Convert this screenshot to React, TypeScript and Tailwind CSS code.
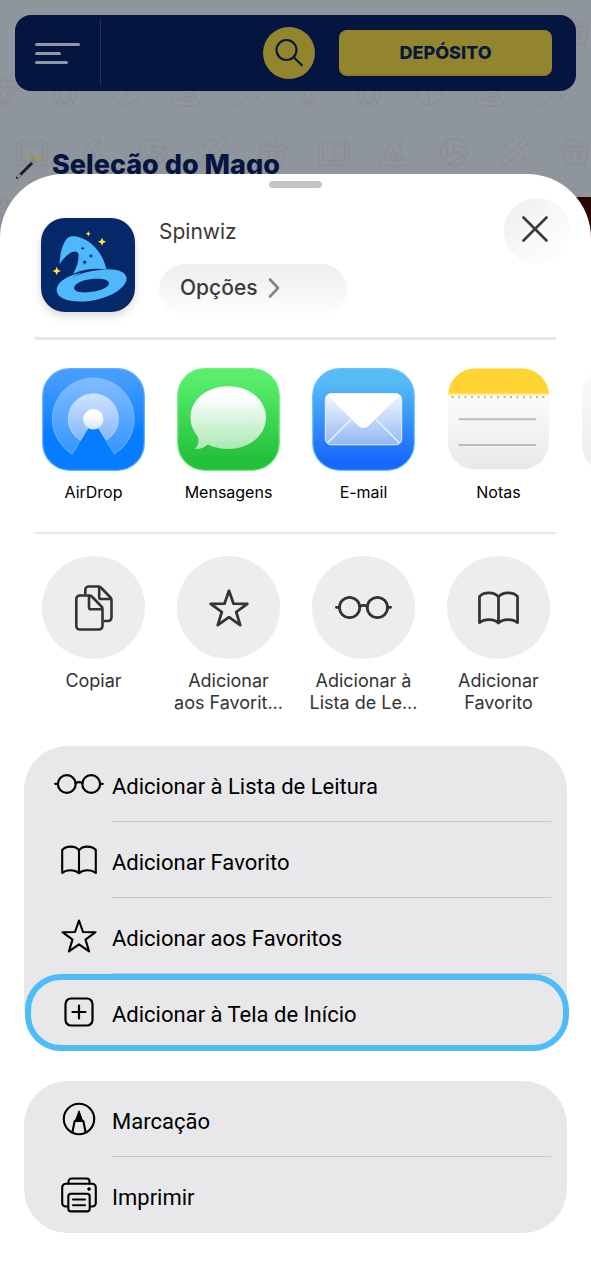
import type { ReactNode } from 'react';
import { Box, Gem, Luggage, Volleyball, WandSparkles } from 'lucide-react';

type IconProps = { className?: string; stroke?: number; strokeWidth?: number };

const GlassesIcon = ({ className, stroke = 2.2 }: IconProps) => (
  <svg viewBox="0 0 50 20" className={className} fill="none" stroke="currentColor" strokeWidth={stroke} strokeLinecap="round" aria-hidden="true">
    <circle cx="12.8" cy="10" r="8.9" />
    <circle cx="37.2" cy="10" r="8.9" />
    <path d="M21.5 9.1c1.8-.9 5.2-.9 7 0M1.2 9.8h2.6M46.2 9.8h2.6" />
  </svg>
);

const BookIcon = ({ className, stroke = 2.1 }: IconProps) => (
  <svg viewBox="0 0 36 30" className={className} fill="none" stroke="currentColor" strokeWidth={stroke} strokeLinejoin="round" aria-hidden="true">
    <path d="M18 5.4C16.4 2.9 13 1.6 9.6 1.6 6.2 1.6 3 2.7 1.2 5v23c2-1.7 5-2.7 8.4-2.7 3.4 0 6.4 1 8.4 2.9 2-1.9 5-2.9 8.4-2.9 3.4 0 6.4 1 8.4 2.7V5C33 2.7 29.8 1.6 26.4 1.6 23 1.6 19.6 2.9 18 5.4Zm0 0v22.8" />
  </svg>
);

const StarIcon = ({ className, stroke = 2.1 }: IconProps) => (
  <svg viewBox="0 0 36 34" className={className} fill="none" stroke="currentColor" strokeWidth={stroke} strokeLinejoin="round" aria-hidden="true">
    <path d="M18 1.5 22 13l12.5.2-10 7.4 3.6 11.8L18 25.3 7.9 32.4l3.6-11.8-10-7.4L14 13Z" />
  </svg>
);

const CopyIcon = ({ className, stroke = 2.6 }: IconProps) => (
  <svg viewBox="0 0 38 46" className={className} fill="none" stroke="currentColor" strokeWidth={stroke} strokeLinejoin="round" aria-hidden="true">
    <path d="M10.3 9.5V5a3.5 3.5 0 0 1 3.5-3.5h9.5c1 0 1.8.3 2.5 1l9.7 10c.7.7 1 1.5 1 2.5v17.5a3.5 3.5 0 0 1-3.5 3.5h-4.5" />
    <path d="M24.2 2v10.2c0 1.2.6 1.8 1.8 1.8h10" />
    <path d="M4.8 10.5h9.5c1 0 1.8.3 2.5 1l9.7 10c.7.7 1 1.5 1 2.5v17a3.5 3.5 0 0 1-3.5 3.5H4.8A3.5 3.5 0 0 1 1.3 41V14a3.5 3.5 0 0 1 3.5-3.5Z" />
    <path d="M14 11v11.5c0 1.2.6 1.8 1.8 1.8H27" />
  </svg>
);

const AddSquareIcon = ({ className, stroke = 2.2 }: IconProps) => (
  <svg viewBox="0 0 30 30" className={className} fill="none" stroke="currentColor" strokeWidth={stroke} strokeLinecap="round" aria-hidden="true">
    <rect x="1.5" y="1.5" width="27" height="27" rx="5.5" />
    <path d="M15 8.5v13M8.5 15h13" />
  </svg>
);

const MarkupIcon = ({ className, stroke = 2.1 }: IconProps) => (
  <svg viewBox="0 0 34 34" className={className} fill="none" stroke="currentColor" strokeWidth={stroke} strokeLinejoin="round" aria-hidden="true">
    <circle cx="17" cy="17" r="15.2" />
    <path d="M10.3 30.5 12.7 19h8.6l2.4 11.5" />
    <path d="m17 8.8 3.8 10.2h-7.6Z" fill="currentColor" strokeWidth="1" />
  </svg>
);

const PrinterIcon = ({ className, stroke = 2.1 }: IconProps) => (
  <svg viewBox="0 0 36 36" className={className} fill="none" stroke="currentColor" strokeWidth={stroke} strokeLinecap="round" aria-hidden="true">
    <path d="M7.5 6.5v-2a3 3 0 0 1 3-3h15a3 3 0 0 1 3 3v2" />
    <path d="M7 29.5H4.7a3.5 3.5 0 0 1-3.5-3.5V10.5A3.8 3.8 0 0 1 5 6.7h26a3.8 3.8 0 0 1 3.8 3.8V26a3.5 3.5 0 0 1-3.5 3.5H29" />
    <rect x="7.3" y="16.8" width="21.4" height="17.6" rx="2.6" />
    <path d="M12 22.5h12M12 28.2h12" />
    <circle cx="28" cy="12" r="1.3" fill="currentColor" strokeWidth="1" />
  </svg>
);

const SpellBook = ({ className }: IconProps) => (
  <svg viewBox="0 0 24 24" className={className} fill="none" stroke="currentColor" aria-hidden="true">
    <path d="M1 5h3V3l8 2 8-2v2h3v17H1ZM12 5v17M4 5v14h16V5M7 4.5v5M9.5 5v4M14.5 5v4M17 4.5v5" />
  </svg>
);

const WizardHat = ({ className }: IconProps) => (
  <svg viewBox="0 0 24 24" className={className} fill="none" stroke="currentColor" strokeLinejoin="round" aria-hidden="true">
    <path d="M5 17C7 9 10 3 17 2l2 3-3 .5c0 4 2 8 3 11.5M5 17c-5 1-5 4 0 5 4 .8 10 .8 14 0 5-1 5-4 0-5-3 2-11 2-14 0ZM12 11l1 2h2l-1.5 1.5.5 2-2-1-2 1 .5-2L9 13h2Z" />
  </svg>
);

const Cauldron = ({ className }: IconProps) => (
  <svg viewBox="0 0 24 24" className={className} fill="none" stroke="currentColor" strokeLinejoin="round" aria-hidden="true">
    <path d="M2 8h20v3H2ZM4 11c-2 5-1 8 2 10h12c3-2 4-5 2-10M6 21l-2 2M18 21l2 2M8 11v4c0 1 2 1 2 0v-4M14 11v6c0 1 2 1 2 0v-6" />
    <circle cx="8" cy="5" r="2" />
    <circle cx="14" cy="3.5" r="1.5" />
    <circle cx="18" cy="6" r="1" />
  </svg>
);

const SpinwizLogo = () => (
  <svg viewBox="0 0 94 94" className="size-[94px] shrink-0 rounded-3xl drop-shadow-lg" aria-hidden="true">
    <rect width="94" height="94" fill="#05286b" />
    <path fill="#4fb8fb" d="M18.5 46.3C19 34 23 18.5 31 18.3 44 18 61 30 65.5 51.5c-11-1.5-23-.5-33.5 4.5 3.5-6 6-13 5.5-19.5C36.5 30.5 27 33 18.5 46.3Z" />
    <path fill="#4fb8fb" fillRule="evenodd" d="M58 52c17-2.5 28 1.5 27.5 9-.5 9-17 19.5-37 22C30 85 16 81 15.7 72.500 15.5 64 27 57.5 40 54.8 34 58 32 59 32 59c8-3.5 16-6 26-7ZM51 61c-9 .8-17.8 4.5-17.8 9 0 3.5 6 5.2 16 4 11-1.2 19-5 18.8-9-.2-3.5-8-4.8-17-4Z" />
    <g fill="#ffe92e">
      <path d="m47.3 13 .8 1.9 1.9.8-1.9.8-.8 1.9-.8-1.9-1.9-.8 1.9-.8Z" />
      <path d="m61 19.5 1.2 3 3 1.2-3 1.2-1.2 3-1.2-3-3-1.2 3-1.2Z" />
      <path d="m15.7 48.8 1.2 3 3 1.2-3 1.2-1.2 3-1.2-3-3-1.2 3-1.2Z" />
    </g>
    <g fill="#05286b">
      <path d="m41.7 28.3.6 1.4 1.4.6-1.4.6-.6 1.4-.6-1.4-1.4-.6 1.4-.6Z" />
      <path d="m50 35.8.7 1.5 1.5.7-1.5.7-.7 1.5-.7-1.5-1.5-.7 1.5-.7Z" />
      <path d="m43.7 41.8.8 1.7 1.7.8-1.7.8-.8 1.7-.8-1.7-1.7-.8 1.7-.8Z" />
    </g>
  </svg>
);

const AirDropTile = () => (
  <svg viewBox="0 0 103 103" className="size-[103px]" aria-hidden="true">
    <defs>
      <linearGradient id="air" x1="0" y1="0" x2="0" y2="1">
        <stop offset="0.1" stopColor="#459cfe" />
        <stop offset="0.65" stopColor="#057dfe" />
      </linearGradient>
      <linearGradient id="airOuter" x1="0" y1="0" x2="0" y2="1">
        <stop offset="0" stopColor="#82bcff" />
        <stop offset="1" stopColor="#3396ff" />
      </linearGradient>
      <linearGradient id="airInner" x1="0" y1="0" x2="0" y2="1">
        <stop offset="0" stopColor="#cfe4ff" />
        <stop offset="1" stopColor="#84b6fb" />
      </linearGradient>
      <linearGradient id="airDot" x1="0" y1="0" x2="0" y2="1">
        <stop offset="0.3" stopColor="#fff" />
        <stop offset="1" stopColor="#d5e3fb" />
      </linearGradient>
    </defs>
    <rect x="0.7" y="0.7" width="101.6" height="101.6" rx="27" fill="url(#air)" stroke="#5fb0ff" strokeWidth="1.2" />
    <path d="M51.3 52 30.3 86A41 41 0 1 1 72.3 86Z" fill="url(#airOuter)" stroke="#7dbcff" strokeWidth="0.8" strokeLinejoin="round" />
    <path d="M51.3 52 38.7 72.3A25 25 0 1 1 63.9 72.3Z" fill="url(#airInner)" stroke="#c5defe" strokeWidth="0.8" strokeLinejoin="round" />
    <path d="M51.3 52 30.3 86.7 34 90H69l3.3-3.3Z" fill="#057dfe" />
    <circle cx="51.3" cy="51.2" r="10.2" fill="url(#airDot)" />
  </svg>
);

const MessagesTile = () => (
  <svg viewBox="0 0 103 103" className="size-[103px]" aria-hidden="true">
    <defs>
      <linearGradient id="msg" x1="0" y1="0" x2="0" y2="1">
        <stop offset="0.1" stopColor="#58ee6c" />
        <stop offset="0.9" stopColor="#23c03c" />
      </linearGradient>
      <linearGradient id="bubble" x1="0" y1="0" x2="0" y2="1">
        <stop offset="0.15" stopColor="#fff" />
        <stop offset="1" stopColor="#abe8b3" />
      </linearGradient>
    </defs>
    <rect x="0.7" y="0.7" width="101.6" height="101.6" rx="27" fill="url(#msg)" stroke="#6fee80" strokeWidth="1.2" />
    <path
      fill="url(#bubble)"
      d="M51.3 18.3C72.5 18.3 89 31.8 89 49.5S72.5 81 51.3 81c-7.5 0-14.8-1.6-20.5-4.5-3.3 3.2-8.500 5-13.1 4.3 3.9-3.6 4.7-8.3 2.8-12.8C16 62.5 13.5 56.5 13.5 49.5 13.5 31.8 30 18.3 51.3 18.3Z"
    />
  </svg>
);

const MailTile = () => (
  <svg viewBox="0 0 103 103" className="size-[103px]" aria-hidden="true">
    <defs>
      <linearGradient id="mail" x1="0" y1="0" x2="0" y2="1">
        <stop offset="0.12" stopColor="#57bcf5" />
        <stop offset="0.9" stopColor="#1769fb" />
      </linearGradient>
      <linearGradient id="paper" x1="0" y1="0" x2="0" y2="1">
        <stop offset="0" stopColor="#f6f9ff" />
        <stop offset="1" stopColor="#93b8f3" />
      </linearGradient>
    </defs>
    <rect x="0.7" y="0.7" width="101.6" height="101.6" rx="27" fill="url(#mail)" stroke="#6cc3fa" strokeWidth="1.2" />
    <rect x="13.3" y="25.6" width="76.4" height="51.2" rx="6" fill="url(#paper)" stroke="#e8f1ff" />
    <path d="M15.5 75 39 51.5M87.5 75 64 51.5" stroke="#f2f7ff" strokeWidth="1.2" />
    <path d="M15.5 27.2c1.2-1.2 2.5-1.6 4-1.6h64c1.5 0 2.8.4 4 1.6L57.5 57c-3.5 3.8-8.7 3.8-12.2 0Z" fill="#fff" />
  </svg>
);

const NotesTile = () => (
  <svg viewBox="0 0 103 103" className="size-[103px]" aria-hidden="true">
    <defs>
      <linearGradient id="note" x1="0" y1="0" x2="0" y2="1">
        <stop offset="0.3" stopColor="#fbfbfb" />
        <stop offset="1" stopColor="#e8e8e8" />
      </linearGradient>
      <clipPath id="noteClip">
        <rect x="1" y="0.5" width="101" height="101" rx="27" />
      </clipPath>
    </defs>
    <g clipPath="url(#noteClip)">
      <rect width="103" height="103" fill="url(#note)" />
      <rect width="103" height="27" fill="#ffd434" />
      <rect y="25.5" width="103" height="2" fill="#ffee9e" />
    </g>
    <path d="M5.5 29.2h92" stroke="#b5b0a2" strokeWidth="2.2" strokeLinecap="round" strokeDasharray="0 6.5" />
    <path d="M12.5 51.3h76M12.5 77h76" stroke="#bcbcbc" strokeWidth="2" strokeLinecap="round" />
  </svg>
);

const WandIcon = () => (
  <svg viewBox="0 0 28 28" className="size-7 shrink-0" aria-hidden="true">
    <path d="M1.5 26.5 20 8" stroke="#1d1f22" strokeWidth="3" strokeLinecap="round" />
    <path d="m1.5 26.5 3-3M16 12l4-4" stroke="#8f8f8c" strokeWidth="3" />
    <path d="m21 2 1.2 3.8L26 7l-3.8 1.2L21 12l-1.2-3.8L16 7l3.8-1.2ZM13.5 3l.7 2 2 .7-2 .7-.7 2-.7-2-2-.7 2-.7Z" fill="#aa984a" />
  </svg>
);

const patternRows = [0, 1, 2, 3];
const evenPattern = [SpellBook, WizardHat, Volleyball, WandSparkles, Cauldron];
const oddPattern = [Gem, Luggage, Box, WizardHat, WandSparkles];

const apps: { name: string; tile: ReactNode }[] = [
  { name: 'AirDrop', tile: <AirDropTile /> },
  { name: 'Mensagens', tile: <MessagesTile /> },
  { name: 'E-mail', tile: <MailTile /> },
  { name: 'Notas', tile: <NotesTile /> },
];

const shortcuts: { lines: string[]; icon: ReactNode }[] = [
  { lines: ['Copiar'], icon: <CopyIcon className="h-[46px] w-[38px]" /> },
  { lines: ['Adicionar', 'aos Favorit...'], icon: <StarIcon className="h-[38px] w-10" stroke={2.5} /> },
  { lines: ['Adicionar à', 'Lista de Le...'], icon: <GlassesIcon className="h-[23px] w-[57px]" stroke={2.4} /> },
  { lines: ['Adicionar', 'Favorito'], icon: <BookIcon className="h-[34px] w-[41px]" stroke={2.4} /> },
];

const mainActions: { label: string; icon: ReactNode; highlighted?: boolean }[] = [
  { label: 'Adicionar à Lista de Leitura', icon: <GlassesIcon className="h-5 w-[50px]" /> },
  { label: 'Adicionar Favorito', icon: <BookIcon className="h-[30px] w-9" /> },
  { label: 'Adicionar aos Favoritos', icon: <StarIcon className="h-[34px] w-9" /> },
  { label: 'Adicionar à Tela de Início', icon: <AddSquareIcon className="size-[30px]" />, highlighted: true },
];

const moreActions: { label: string; icon: ReactNode }[] = [
  { label: 'Marcação', icon: <MarkupIcon className="size-[34px]" /> },
  { label: 'Imprimir', icon: <PrinterIcon className="size-9" /> },
];

function ActionRow({ label, icon, last }: { label: string; icon: ReactNode; last: boolean }) {
  return (
    <button type="button" className="flex h-[76px] w-full items-stretch pl-[30px] pr-4 text-left">
      <span className="flex w-[50px] shrink-0 items-center justify-center">{icon}</span>
      <span className={`ml-2 flex flex-1 items-center border-b pt-[6px] ${last ? 'border-transparent' : 'border-[#c8c8ca]'}`}>{label}</span>
    </button>
  );
}

export default function App() {
  return (
    <div className="relative flex min-h-screen flex-col overflow-hidden bg-[#8f959c] font-['Inter','Liberation_Sans',sans-serif]">
      {/* Faint icon pattern */}
      <div className="absolute inset-x-0 top-4 flex flex-col gap-7 text-[#898e93]" aria-hidden="true">
        {patternRows.map((row) => {
          const icons = row % 2 ? oddPattern : evenPattern;
          return (
            <div key={row} className={`flex justify-between ${row % 2 ? '-ml-3 mr-6' : 'ml-4'}`}>
              {[...icons, ...icons].map((Icon, i) => (
                <Icon key={i} className="size-8" strokeWidth={1} />
              ))}
            </div>
          );
        })}
      </div>

      {/* Site header */}
      <header className="relative mx-[15px] mt-[15px] flex h-[76px] items-center rounded-2xl bg-[#04153f] pr-6">
        <button type="button" aria-label="Menu" className="flex h-[66px] w-[86px] flex-col items-start justify-center gap-[6px] border-r border-[#253255] pl-5">
          <span className="h-[3px] w-[45px] rounded-full bg-[#9097a6]" />
          <span className="h-[3px] w-[26px] rounded-full bg-[#9097a6]" />
          <span className="h-[3px] w-[33px] rounded-full bg-[#9097a6]" />
        </button>
        <button type="button" aria-label="Buscar" className="ml-auto flex size-[52px] items-center justify-center rounded-full bg-[#92852e] text-[#06193c]">
          <svg viewBox="0 0 30 30" className="size-[30px]" fill="none" stroke="currentColor" strokeWidth="2.2" strokeLinecap="round" aria-hidden="true">
            <circle cx="12.5" cy="12" r="10" />
            <path d="m19.8 19.3 8 8" />
          </svg>
        </button>
        <button type="button" className="ml-6 h-[46px] w-[213px] rounded-lg border-b-2 border-[#92762e] bg-[#92852e] pt-[2px] text-lg font-extrabold text-[#06193c]">
          DEPÓSITO
        </button>
      </header>

      <div className="relative mt-[58px] flex items-center gap-2 pl-4">
        <WandIcon />
        <h2 className="text-[27px] font-extrabold leading-8 text-[#04153f]">Seleção do Mago</h2>
      </div>
      <div className="relative mt-4 h-16 w-8 self-end bg-[#2a0503]" />

      {/* Share sheet */}
      <main className="relative -mt-[87px] flex flex-1 flex-col rounded-t-[64px] bg-white pb-[47px]">
        <div className="mx-auto mt-[7px] h-[7px] w-[53px] rounded-full bg-[#c4c4c6]" />

        <section className="mt-[10px] flex items-start pl-[41px] pr-[21px]">
          <div className="pt-5">
            <SpinwizLogo />
          </div>
          <div className="ml-6 pt-5">
            <h1 className="text-[21px] leading-7 text-[#3a3a3a]">Spinwiz</h1>
            <button type="button" className="mt-[18px] flex h-[52px] w-[188px] items-center rounded-full bg-linear-to-b from-[#eeeeee] via-[#f6f6f6] to-white pb-1 pl-[21px] text-[21px] font-medium text-[#3a3a3a]">
              Opções
              <svg viewBox="0 0 12 20" className="ml-[10px] h-5 w-3" fill="none" stroke="#858585" strokeWidth="2.6" strokeLinecap="round" strokeLinejoin="round" aria-hidden="true">
                <path d="m2 1.5 8 8.5-8 8.5" />
              </svg>
            </button>
          </div>
          <button type="button" aria-label="Fechar" className="ml-auto flex size-[66px] items-center justify-center rounded-full bg-linear-to-br from-[#ededed] via-[#f8f8f8] to-white pb-1 pr-1 text-[#3a3a3a]">
            <svg viewBox="0 0 26 26" className="size-[26px]" fill="none" stroke="currentColor" strokeWidth="2.6" strokeLinecap="round" aria-hidden="true">
              <path d="m1.5 1.5 23 23m0-23-23 23" />
            </svg>
          </button>
        </section>

        <hr className="mx-[35px] mt-[21px] border-t-[3px] border-[#e6e6e6]" />

        <section className="mt-7 flex gap-8 overflow-hidden pl-[42px]">
          {apps.map((app) => (
            <button key={app.name} type="button" className="flex w-[103px] shrink-0 flex-col items-center">
              {app.tile}
              <span className="mt-[11px] text-base leading-5 text-black">{app.name}</span>
            </button>
          ))}
          <div className="h-[103px] w-[103px] shrink-0 rounded-[26px] bg-linear-to-b from-[#fafafa] to-[#ededed]" />
        </section>

        <hr className="mx-[35px] mt-[30px] border-t-2 border-[#e8e8e8]" />

        <section className="mt-[22px] flex gap-8 overflow-hidden pl-[42px]">
          {shortcuts.map((item) => (
            <button key={item.lines.join(' ')} type="button" className="flex w-[103px] shrink-0 flex-col items-center text-[#333333]">
              <span className="flex size-[103px] items-center justify-center rounded-full bg-[#ededed]">{item.icon}</span>
              <span className="mt-[11px] flex flex-col items-center whitespace-nowrap text-lg leading-[22px]">
                {item.lines.map((line) => (
                  <span key={line}>{line}</span>
                ))}
              </span>
            </button>
          ))}
        </section>

        <section className="mx-6 mt-8 rounded-[44px] bg-[#e8e8ea] font-['Roboto','Liberation_Sans',sans-serif] text-[22px] text-black">
          {mainActions.map((action, i) => (
            <div key={action.label} className="relative">
              <ActionRow label={action.label} icon={action.icon} last={i === mainActions.length - 1} />
              {action.highlighted && (
                <div className="pointer-events-none absolute -right-[2px] left-px top-0 h-[77px] rounded-[36px] border-6 border-[#4cbdf9]" />
              )}
            </div>
          ))}
        </section>

        <section className="mx-6 mt-[31px] rounded-[44px] bg-[#e8e8ea] font-['Roboto','Liberation_Sans',sans-serif] text-[22px] text-black">
          {moreActions.map((action, i) => (
            <ActionRow key={action.label} label={action.label} icon={action.icon} last={i === moreActions.length - 1} />
          ))}
        </section>
      </main>
    </div>
  );
}
